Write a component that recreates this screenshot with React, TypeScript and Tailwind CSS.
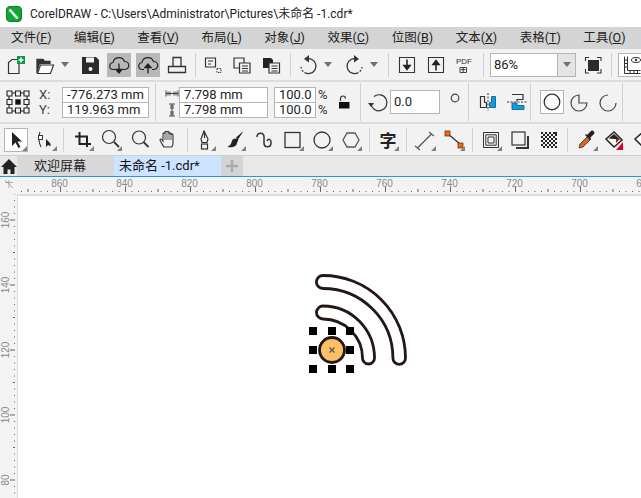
import type { ReactNode } from 'react';

const UI_FONT = "font-['Roboto','Noto_Sans_CJK_SC',sans-serif]";

const MENU = [
  ['文件', 'F'],
  ['编辑', 'E'],
  ['查看', 'V'],
  ['布局', 'L'],
  ['对象', 'J'],
  ['效果', 'C'],
  ['位图', 'B'],
  ['文本', 'X'],
  ['表格', 'T'],
  ['工具', 'O'],
];

const INK = '#333333';

function Ico({ children, className = '' }: { children: ReactNode; className?: string }) {
  return (
    <svg viewBox="0 0 24 24" fill="none" className={`h-6 w-6 shrink-0 ${className}`}>
      {children}
    </svg>
  );
}

function Fly() {
  return <path d="M23 18v5h-5z" fill="#808080" />;
}

function Sep({ className = '' }: { className?: string }) {
  return <div className={`h-[24px] w-px shrink-0 bg-[#d0d0d0] ${className}`} />;
}

function Drop({ className = '' }: { className?: string }) {
  return (
    <svg viewBox="0 0 8 5" className={`h-[5px] w-2 shrink-0 ${className}`}>
      <path d="M0 0h8L4 5z" fill="#707070" />
    </svg>
  );
}

function FileToolbar() {
  return (
    <div className="flex h-[31px] shrink-0 items-center overflow-hidden bg-[#f2f2f2]">
      <Ico className="ml-[5px]">
        <path d="M3.500 9.500 7 6.500h7v14H3.500z" stroke={INK} strokeWidth="1.200" />
        <rect x="12" y="3" width="8" height="8" fill="#0a9a45" />
        <path d="M16 4.500v5M13.500 7h5" stroke="#fff" strokeWidth="1.500" />
      </Ico>
      <Ico className="ml-1">
        <path d="M4 20V6.500h6l1.500 2H17V11" stroke={INK} strokeWidth="1.300" />
        <path d="M4 6h6l1.500 2H17v3H7L4 20z" fill={INK} />
        <path d="M4.500 20.500 7.500 12h13l-3 8.500z" fill="#fff" stroke={INK} strokeWidth="1.200" />
      </Ico>
      <Drop className="ml-1" />
      <Ico className="ml-[9px]">
        <path d="M4 4h14l3 3v14H4z" fill="#2b2b2b" />
        <rect x="8" y="4.500" width="8" height="5" fill="#f2f2f2" />
        <circle cx="12.500" cy="16" r="2" fill="#f2f2f2" />
      </Ico>
      <div className="ml-[5px] flex h-6 w-6 shrink-0 items-center justify-center bg-[#b8b8b8]">
        <Ico>
          <path d="M8 16.500H6.500a3.500 3.500 0 0 1-.5-7 6 6 0 0 1 11.500-1 4 4 0 0 1 .5 8H16" stroke="#222" strokeWidth="1.200" />
          <path d="M12 10.500v9M9 16.500l3 3.500 3-3.500z" stroke="#222" strokeWidth="1.300" fill="#222" />
        </Ico>
      </div>
      <div className="ml-[5px] flex h-6 w-6 shrink-0 items-center justify-center bg-[#b8b8b8]">
        <Ico>
          <path d="M8 16.500H6.500a3.500 3.500 0 0 1-.5-7 6 6 0 0 1 11.500-1 4 4 0 0 1 .5 8H16" stroke="#222" strokeWidth="1.200" />
          <path d="M12 20.500v-9M9 14.500l3-3.500 3 3.500z" stroke="#222" strokeWidth="1.300" fill="#222" />
        </Ico>
      </div>
      <Ico className="ml-[5px]">
        <path d="M8 13V4.500h8V13M3.500 13.500h17v6h-17z" stroke={INK} strokeWidth="1.300" />
      </Ico>
      <Sep className="ml-[6px]" />
      <Ico className="ml-[5px]">
        <path d="M4.500 5h10v9h-10zM7 8h5M7 11h3" stroke={INK} strokeWidth="1.200" />
        <path d="M16 15.500h4v4h-4z" stroke={INK} strokeWidth="1" strokeDasharray="1.400 1" />
      </Ico>
      <Ico className="ml-[5px]">
        <path d="M4 5h10v10H4z" fill="#f2f2f2" stroke={INK} strokeWidth="1.200" />
        <path d="M9.500 10h10.500v10H9.500zM12 13h6M12 15.500h6M12 18h6" fill="#f2f2f2" stroke={INK} strokeWidth="1.200" />
      </Ico>
      <Ico className="ml-[5px]">
        <path d="M4 5h8l2 2v8H4z" fill="#222" />
        <path d="M10 10h10.500v10H10zM12.500 13h6M12.500 15.500h6M12.500 18h6" fill="#f2f2f2" stroke={INK} strokeWidth="1.200" />
      </Ico>
      <Sep className="ml-[7px]" />
      <Ico className="ml-[6px]">
        <path d="M9 6a7.500 7.500 0 1 1-5 8" stroke={INK} strokeWidth="1.300" strokeDasharray="30 1.500 2 1.500" />
        <path d="M12 2v7.500L7 6z" fill={INK} />
      </Ico>
      <Drop className="ml-[3px]" />
      <Ico className="ml-[10px]">
        <path d="M15 6a7.500 7.500 0 1 0 5 8" stroke={INK} strokeWidth="1.300" strokeDasharray="30 1.500 2 1.500" />
        <path d="M12 2v7.500L17 6z" fill={INK} />
      </Ico>
      <Drop className="ml-1" />
      <Sep className="ml-[10px]" />
      <Ico className="ml-[6px]">
        <path d="M4.500 4.500h15v15h-15z" stroke={INK} strokeWidth="1.100" />
        <path d="M12 6.500v9M9 12.500l3 4 3-4z" stroke="#222" strokeWidth="1.600" fill="#222" />
      </Ico>
      <Ico className="ml-[5px]">
        <path d="M4.500 4.500h15v15h-15z" stroke={INK} strokeWidth="1.100" />
        <path d="M12 17.500v-9M9 11.500l3-4 3 4z" stroke="#222" strokeWidth="1.600" fill="#222" />
      </Ico>
      <Ico className="ml-1">
        <text x="12" y="11" textAnchor="middle" fontSize="8" fontFamily="Liberation Sans, sans-serif" fill="#333">
          PDF
        </text>
        <path d="M8 14.500h6.500v5H8zM11.200 14v5M9 16.500h4.500" stroke={INK} strokeWidth="0.900" />
      </Ico>
      <Sep className="ml-[7px]" />
      <div className="ml-[6px] flex h-[24px] w-[86px] shrink-0 border border-[#b5b5b5] bg-white">
        <div className="flex flex-1 items-center pl-[3px] text-[13px] text-[#222]">86%</div>
        <div className="flex w-[18px] items-center justify-center border-l border-[#b5b5b5] bg-[#e4e4e4]">
          <Drop />
        </div>
      </div>
      <Ico className="ml-[5px]">
        <rect x="7" y="7" width="11" height="11" fill="#2b2b2b" />
        <path d="M4.500 8V4.500H8M16 4.500h4V8M4.500 16v4H8M20 16v4h-4" stroke={INK} strokeWidth="1.100" />
      </Ico>
      <Sep className="ml-[6px]" />
      <div className="ml-[6px] flex h-[24px] w-[30px] shrink-0 items-center border border-[#b5b5b5] bg-white pl-[2px]">
        <Ico>
          <path d="M3.500 3.500v17h16M6.500 3.500v14h13" stroke={INK} strokeWidth="1" />
          <path d="M3.500 7h3M3.500 10.500h3M3.500 14h3M9 17.500v3M13 17.500v3M16.500 17.500v3" stroke={INK} strokeWidth="1" />
          <ellipse cx="15" cy="7" rx="4.500" ry="2.500" stroke={INK} strokeWidth="1" />
          <circle cx="15" cy="7" r="1.200" fill={INK} />
        </Ico>
      </div>
    </div>
  );
}

function NumberBox({ value, className = '' }: { value: string; className?: string }) {
  return (
    <div className={`flex items-center border border-[#b5b5b5] bg-white pl-[4px] text-[13px] leading-[13px] text-[#222] ${className}`}>
      {value}
    </div>
  );
}

function PropertyBar() {
  return (
    <div className="flex h-[40px] shrink-0 items-center overflow-hidden bg-[#f2f2f2]">
      <svg viewBox="0 0 24 24" fill="none" className="ml-[6px] h-6 w-6 shrink-0">
        <path d="M3 3h18v18H3z" stroke="#222" strokeWidth="1.100" />
        <path d="M1 1h5v5H1zM9.500 1h5v5h-5zM18 1h5v5h-5zM1 9.500h5v5H1zM18 9.500h5v5h-5zM1 18h5v5H1zM9.500 18h5v5h-5zM18 18h5v5h-5z" fill="#f2f2f2" stroke="#222" strokeWidth="1.100" />
        <rect x="9.300" y="9.300" width="5.400" height="5.400" fill="#111" />
      </svg>
      <div className="ml-[9px] flex w-[22px] shrink-0 flex-col text-[13px] leading-[15px] text-[#444]">
        <span>X:</span>
        <span>Y:</span>
      </div>
      <div className="ml-[1px] flex w-[87px] shrink-0 flex-col">
        <NumberBox value="-776.273 mm" className="h-[16px]" />
        <NumberBox value="119.963 mm" className="h-[15px] border-t-0" />
      </div>
      <Sep className="ml-[6px] !h-[38px]" />
      <div className="ml-[8px] flex w-[15px] shrink-0 flex-col items-center gap-[3px]">
        <svg viewBox="0 0 14 12" fill="none" className="h-[13px] w-[14px]">
          <path d="M1 3v6M13 3v6M1 6h12M3 4v4M5 4v4M9 4v4M11 4v4" stroke="#444" strokeWidth="1" />
        </svg>
        <svg viewBox="0 0 12 14" fill="none" className="h-[14px] w-[12px]">
          <path d="M3 1h6M3 13h6M6 1v12M4 3h4M4 5h4M4 9h4M4 11h4" stroke="#444" strokeWidth="1" />
        </svg>
      </div>
      <div className="flex w-[89px] shrink-0 flex-col">
        <NumberBox value="7.798 mm" className="h-[16px]" />
        <NumberBox value="7.798 mm" className="h-[15px] border-t-0" />
      </div>
      <div className="ml-[6px] flex w-[42px] shrink-0 flex-col">
        <NumberBox value="100.0" className="h-[16px]" />
        <NumberBox value="100.0" className="h-[15px] border-t-0" />
      </div>
      <div className="ml-[2px] flex w-[14px] shrink-0 flex-col text-[13px] leading-[15px] text-[#333]">
        <span>%</span>
        <span>%</span>
      </div>
      <svg viewBox="0 0 12 14" fill="none" className="ml-[6px] h-[14px] w-3 shrink-0">
        <path d="M2.500 6V3.500a2.500 2.500 0 0 1 5 0" stroke="#333" strokeWidth="1.200" />
        <rect x="1" y="7" width="10.500" height="6.500" fill="#111" />
      </svg>
      <Sep className="ml-[10px] !h-[38px]" />
      <Ico className="ml-[6px]">
        <path d="M7 6.500a8 8 0 1 1-3 7" stroke={INK} strokeWidth="1.200" />
        <path d="M1 13h6l-3 4z" fill={INK} />
      </Ico>
      <div className="ml-[-1px] flex h-[24px] w-[50px] shrink-0 items-center border border-[#b5b5b5] bg-white pl-[3px] text-[13px] text-[#222]">
        0.0
      </div>
      <svg viewBox="0 0 10 10" fill="none" className="mb-[8px] ml-[10px] h-[10px] w-[10px] shrink-0">
        <circle cx="5" cy="5" r="3.800" stroke="#444" strokeWidth="1.200" />
      </svg>
      <Sep className="ml-[8px] !h-[38px]" />
      <Ico className="ml-[7px]">
        <path d="M12 3v18" stroke="#333" strokeWidth="1" strokeDasharray="2 1.500" />
        <path d="M4.500 6.500h4v6h2v5h-6z" stroke="#333" strokeWidth="1.200" />
        <path d="M19.500 6.500h-4v6h-2v5h6z" fill="#0f9bdc" stroke="#1c6f9c" strokeWidth="1" />
      </Ico>
      <Ico className="ml-[5px]">
        <path d="M2 12h20" stroke="#333" strokeWidth="1" strokeDasharray="2 1.500" />
        <path d="M7 4.500h11v5h-6v2" stroke="#333" strokeWidth="1.200" />
        <path d="M7 19.500h12v-4h-7v-2.500H7z" fill="#0f9bdc" stroke="#1c6f9c" strokeWidth="1" />
      </Ico>
      <Sep className="ml-[1px] !h-[38px]" />
      <div className="ml-[9px] flex h-[24px] w-[24px] shrink-0 items-center justify-center border border-[#b5b5b5] bg-white">
        <svg viewBox="0 0 18 18" fill="none" className="h-[18px] w-[18px]">
          <circle cx="9" cy="9" r="7.800" stroke="#333" strokeWidth="1.300" />
        </svg>
      </div>
      <Ico className="ml-[4px]">
        <path d="M11 5a8 8 0 1 0 8 8h-8z" stroke="#444" strokeWidth="1.200" />
      </Ico>
      <Ico className="ml-[5px]">
        <path d="M11 5a8 8 0 1 0 8 8" stroke="#444" strokeWidth="1.200" />
      </Ico>
      <Sep className="ml-[1px] !h-[38px]" />
    </div>
  );
}

function Toolbox() {
  return (
    <div className="flex h-[31px] shrink-0 items-center overflow-hidden bg-[#f2f2f2]">
      <div className="ml-1 h-6 w-6 shrink-0 border border-[#b5b5b5] bg-white">
        <svg viewBox="0 0 24 24" className="-ml-px -mt-px h-6 w-6">
          <path d="M8 4v14l3.500-3.500 3 5.500 2-1-3-5.500h4.500z" fill="#222" />
          <Fly />
        </svg>
      </div>
      <Ico className="ml-[6px]">
        <path d="M6 4c-2 5-2 9 1 15" stroke={INK} strokeWidth="1.100" />
        <rect x="4.500" y="7.500" width="4" height="4" fill="#fff" stroke={INK} />
        <path d="M12 11v8l2-2 3 1-1-3z" fill="#222" />
        <Fly />
      </Ico>
      <Sep className="ml-[5px]" />
      <Ico className="ml-[7px]">
        <path d="M4 8.500h12V19M8.500 4v12H20" stroke="#222" strokeWidth="2" />
        <Fly />
      </Ico>
      <Ico className="ml-1">
        <circle cx="10" cy="9" r="6.500" stroke={INK} strokeWidth="1.200" />
        <path d="m15 14 5 5" stroke={INK} strokeWidth="1.800" />
        <Fly />
      </Ico>
      <Ico className="ml-[5px]">
        <circle cx="11" cy="9.500" r="6.500" stroke={INK} strokeWidth="1.200" />
        <path d="m15.500 14 5 5" stroke={INK} strokeWidth="1.800" />
      </Ico>
      <Ico className="ml-[5px]">
        <path d="M7 19c-2-2-3-5-4-7 0-1.500 1.500-1.500 3 1V6c0-1.500 2-1.500 2 0V4.500c0-1.500 2-1.500 2 0V4.500c0-1.500 2-1.500 2 0V6c0-1.500 2-1.500 2 0V7c0-1.500 2-1.500 2 0v7c0 3-1 5-2 5z" stroke={INK} strokeWidth="1.100" />
        <path d="M8 6v6M10 5v7M12 5v7M14 6v6" stroke={INK} strokeWidth="0.800" />
      </Ico>
      <Sep className="ml-[6px]" />
      <Ico className="ml-[5px]">
        <path d="M11 3 8 11l1 3.500h5l1-3.500zM11.500 3v7" stroke={INK} strokeWidth="1.200" />
        <rect x="8.500" y="16" width="6" height="5" stroke={INK} strokeWidth="1.200" />
        <Fly />
      </Ico>
      <Ico className="ml-[6px]">
        <path d="M20.500 3 13 9.500l2 2z" fill="#222" />
        <path d="M13 10.500c-3 0-4 1.500-4.500 4-.5 2-2 3-4 4.500 4 1 9 0 9.500-4 .3-1.500 2-3 1-4.500z" fill="#222" />
        <Fly />
      </Ico>
      <Ico className="ml-[5px]">
        <path d="M5 9c0-5 7-5 7 0v6c0 5 7 5 7 0s-3-4-4-2" stroke={INK} strokeWidth="1.500" />
      </Ico>
      <Ico className="ml-[5px]">
        <rect x="4" y="4.500" width="15" height="15" stroke={INK} strokeWidth="1.300" />
        <Fly />
      </Ico>
      <Ico className="ml-[5px]">
        <circle cx="12" cy="12" r="8" stroke={INK} strokeWidth="1.300" />
        <Fly />
      </Ico>
      <Ico className="ml-[5px]">
        <path d="M8 5h8l4 7-4 7H8l-4-7z" stroke="#555" strokeWidth="1.300" />
        <Fly />
      </Ico>
      <Sep className="ml-[6px]" />
      <Ico className="ml-[6px]">
        <text x="12" y="18.500" textAnchor="middle" fontSize="17" fontWeight="700" fontFamily="Noto Sans CJK SC, sans-serif" fill="#222">
          字
        </text>
        <Fly />
      </Ico>
      <Sep className="ml-[6px]" />
      <Ico className="ml-[6px]">
        <path d="m4.500 20 14-14" stroke="#555" strokeWidth="1.200" />
        <path d="M2 18l5 4M16 4l5 4" stroke="#555" strokeWidth="1.200" />
        <Fly />
      </Ico>
      <Ico className="ml-[5px]">
        <path d="m6 6 12 10" stroke="#333" strokeWidth="1.300" />
        <rect x="3" y="3" width="5" height="5" fill="#ee6a10" stroke="#5a2a05" strokeWidth="0.700" />
        <rect x="16" y="15" width="5" height="5" fill="#ee6a10" stroke="#5a2a05" strokeWidth="0.700" />
        <Fly />
      </Ico>
      <Sep className="ml-[6px]" />
      <Ico className="ml-[6px]">
        <path d="M4.500 4.500h15v15h-15zM6.800 6.800h10.400v10.400H6.800zM9 9h6v6H9z" stroke={INK} strokeWidth="1" />
        <Fly />
      </Ico>
      <Ico className="ml-[5px]">
        <rect x="4" y="4" width="13" height="13" stroke={INK} strokeWidth="1.200" />
        <path d="M20 8v12H8" stroke={INK} strokeWidth="2" />
      </Ico>
      <svg viewBox="0 0 16 16" className="ml-[9px] mr-[4px] h-4 w-4 shrink-0">
        <rect width="16" height="16" fill="#222" />
        <path d="M2 0h2v2H2zM6 0h2v2H6zM10 0h2v2h-2zM0 2h2v2H0zM4 2h2v2H4zM8 2h2v2H8zM12 2h2v2h-2zM2 4h2v2H2zM6 4h2v2H6zM10 4h2v2h-2zM14 4h2v2h-2zM0 6h2v2H0zM4 6h2v2H4zM8 6h2v2H8zM12 6h2v2h-2zM2 8h2v2H2zM6 8h2v2H6zM10 8h2v2h-2zM14 8h2v2h-2zM0 10h2v2H0zM4 10h2v2H4zM8 10h2v2H8zM12 10h2v2h-2zM2 12h2v2H2zM6 12h2v2H6zM10 12h2v2h-2zM14 12h2v2h-2zM0 14h2v2H0zM4 14h2v2H4zM8 14h2v2H8zM12 14h2v2h-2z" fill="#f2f2f2" />
      </svg>
      <Sep className="ml-[6px]" />
      <Ico className="ml-[7px]">
        <path d="m4 20 1-4 8-8 3 3-8 8z" fill="#d9691e" stroke="#333" strokeWidth="0.800" />
        <path d="m12 7 4-4c1.500-1.500 4.500 1.500 3 3l-4 4 1 1-1 1-5-5 1-1z" fill="#222" />
        <Fly />
      </Ico>
      <Ico className="ml-1">
        <path d="M11 4 3 11l8 8 8-7z" fill="#fff" stroke="#222" strokeWidth="1.500" />
        <path d="M5.500 10.500 11 6l6 5.500z" fill="#222" />
        <path d="m13 11 4 0-4 4z" fill="#e6001a" />
        <path d="M20 14v8h-7z" fill="#e6001a" />
      </Ico>
      <Ico className="ml-[5px]">
        <path d="M11 4 3 11l8 8 8-7z" fill="#fff" stroke="#222" strokeWidth="1.500" />
      </Ico>
    </div>
  );
}

function TabStrip() {
  return (
    <div className="flex h-[22px] shrink-0 border-b border-t border-b-[#1e9be0] border-t-[#d0d0d0] bg-[#e8e8e8]">
      <div className="flex w-[17px] shrink-0 items-center justify-center">
        <svg viewBox="0 0 16 15" className="h-[15px] w-4">
          <path d="M8 0 0 8h2.500v7h4v-4.500h3V15h4V8H16z" fill="#222" />
        </svg>
      </div>
      <div className="flex w-[97px] shrink-0 items-center bg-[#d8d8d8] pl-[17px] text-[13px] text-[#222]">欢迎屏幕</div>
      <div className="flex w-[107px] shrink-0 items-center bg-[#cce4ff] pl-[5px] text-[13px] text-[#111]">未命名 -1.cdr*</div>
      <div className="flex w-[22px] shrink-0 items-center justify-center bg-[#d4d4d4]">
        <svg viewBox="0 0 12 12" className="h-3 w-3">
          <path d="M6 0v12M0 6h12" stroke="#a8a8a8" strokeWidth="2.400" />
        </svg>
      </div>
    </div>
  );
}

const TOP_LABELS = ['860', '840', '820', '800', '780', '760', '740', '720', '700', '680'];
const SIDE_LABELS = ['160', '140', '120', '100', '80'];
const DOTS = Array.from({ length: 100 }, (_, i) => i);

function TopRuler() {
  return (
    <svg viewBox="0 0 641 17" className="block h-[17px] w-full shrink-0 bg-[#f3f3f3]">
      <path d="M5 5.500h8M9 3v8M5 3l8 8" stroke="#999" strokeWidth="0.800" />
      {DOTS.map((i) => {
        const major = i % 10 === 6;
        const mid = i % 10 === 1;
        return (
          <rect
            key={i}
            x={21 + i * 6.5}
            y={major ? 10 : mid ? 12 : 14}
            width="1"
            height={major ? 5 : mid ? 3 : 1}
            fill="#666"
          />
        );
      })}
      {TOP_LABELS.map((label, i) => (
        <text key={label} x={59.5 + i * 65} y="9.500" textAnchor="middle" fontSize="10" fontFamily="Liberation Sans, sans-serif" fill="#8a8a8a">
          {label}
        </text>
      ))}
    </svg>
  );
}

function SideRuler() {
  return (
    <svg viewBox="0 0 17 304" className="block h-[304px] w-[17px] shrink-0 bg-[#f3f3f3]">
      {DOTS.slice(0, 48).map((i) => {
        const major = i % 10 === 4;
        const mid = i % 10 === 9;
        return (
          <rect
            key={i}
            x={major ? 10 : mid ? 13 : 14}
            y={-0.5 + i * 6.5}
            width={major ? 5 : mid ? 2 : 1}
            height="1"
            fill="#666"
          />
        );
      })}
      {SIDE_LABELS.map((label, i) => (
        <text key={label} transform={`translate(9 ${26 + i * 65}) rotate(-90)`} textAnchor="middle" fontSize="10" fontFamily="Liberation Sans, sans-serif" fill="#8a8a8a">
          {label}
        </text>
      ))}
    </svg>
  );
}

function Artwork() {
  const handles = [
    [313, 331],
    [332, 331],
    [350, 331],
    [313, 350],
    [350, 350],
    [313, 369],
    [332, 369],
    [350, 369],
  ];
  return (
    <svg viewBox="0 0 641 498" fill="none" className="pointer-events-none absolute left-[-18px] top-[-196px] h-[498px] w-[641px]">
      <path d="M323 275.500A82.500 82.500 0 0 1 405.500 358a6.300 6.300 0 0 1-12.600 0 70 69.500 0 0 0-70-69.500 6.500 6.500 0 0 1 0-13z" fill="#fff" stroke="#231815" strokeWidth="2.800" />
      <path d="M323 306a51.500 52 0 0 1 51.500 52 6 6 0 0 1-12 0 39.500 39 0 0 0-39.500-39 6.500 6.500 0 0 1 0-13z" fill="#fff" stroke="#231815" strokeWidth="2.800" />
      <circle cx="332" cy="350" r="12.500" fill="#fdc068" stroke="#231815" strokeWidth="2.800" />
      <path d="m329.500 347.500 5 5m0-5-5 5" stroke="#555" strokeWidth="1.300" />
      {handles.map(([x, y]) => (
        <rect key={`${x}-${y}`} x={x - 4} y={y - 4} width="8" height="8" fill="#000" />
      ))}
    </svg>
  );
}

export default function App() {
  return (
    <div className={`flex h-[498px] w-[641px] flex-col overflow-hidden bg-white ${UI_FONT}`}>
      <div className="flex h-[27px] shrink-0 items-center bg-white pl-[6px]">
        <svg viewBox="0 0 16 16" className="h-4 w-4 shrink-0">
          <rect x="0.500" y="0.500" width="15" height="15" rx="3.500" fill="#12a632" stroke="#0b7a23" />
          <path d="m3.500 3.500 8 9" stroke="#fff" strokeWidth="2.600" />
        </svg>
        <span className="ml-[8px] whitespace-nowrap text-[12px] text-[#222]">
          CorelDRAW - C:\Users\Administrator\Pictures\未命名 -1.cdr*
        </span>
      </div>

      <div className="flex h-[22px] shrink-0 items-center gap-[22.5px] bg-[#d4d4d4] pl-[11px]">
        {MENU.map(([label, key]) => (
          <div key={key} className="shrink-0 whitespace-nowrap text-[12.5px] text-[#222]">
            {label}(<span className="underline">{key}</span>)
          </div>
        ))}
      </div>

      <FileToolbar />
      <div className="h-[2px] shrink-0 bg-[#dcdcdc]" />
      <PropertyBar />
      <div className="h-[2px] shrink-0 bg-[#dcdcdc]" />
      <Toolbox />
      <TabStrip />
      <TopRuler />

      <div className="flex min-h-0 flex-1">
        <SideRuler />
        <div className="relative flex-1 border-l border-t-2 border-[#dcdcdc] bg-white">
          <Artwork />
        </div>
      </div>
    </div>
  );
}
